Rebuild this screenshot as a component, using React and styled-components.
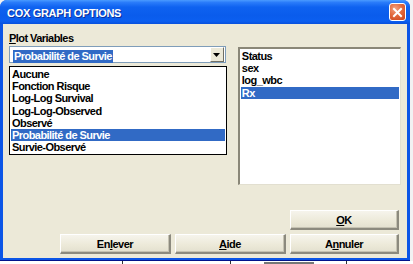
import React from "react";
import styled, { createGlobalStyle } from "styled-components";

const Global = createGlobalStyle`
  html, body { margin: 0; padding: 0; background: #f2f2f2; overflow: hidden; }
  * { box-sizing: border-box; }
`;

const font = `"Liberation Sans", Arial, sans-serif`;

const Page = styled.div`
  width: 413px;
  height: 264px;
  display: flex;
  flex-direction: column;
  background: #f2f2f2;
`;

const Window = styled.div`
  width: 410px;
  height: 261px;
  flex: none;
  display: flex;
  flex-direction: column;
  background: #0b55e6;
  border-radius: 7px 7px 0 0;
  border-bottom: 1px solid #00138c;
  overflow: hidden;
`;

const TitleBar = styled.div`
  height: 24px;
  flex: none;
  display: flex;
  align-items: center;
  justify-content: space-between;
  padding: 0 4px 0 7px;
  background: linear-gradient(
    180deg,
    #4a9bff 0%,
    #2a7cfa 10%,
    #0e62f0 30%,
    #0a5cec 65%,
    #0b5ff0 88%,
    #0850dc 100%
  );
`;

const Title = styled.span`
  font-family: ${font};
  font-weight: bold;
  font-size: 11px;
  color: #fff;
  letter-spacing: -0.3px;
  text-shadow: 1px 1px 0 #0a2e9a;
  padding-top: 1px;
`;

const CloseButton = styled.div`
  width: 17px;
  height: 18px;
  border: 1px solid #fff;
  border-radius: 3px;
  background: radial-gradient(circle at 35% 30%, #f2a282 0%, #e26a3e 45%, #c9411a 100%);
  display: flex;
  align-items: center;
  justify-content: center;
`;

const Body = styled.div`
  flex: 1;
  margin: 0 3px 2px 3px;
  background: #ece9d8;
  display: flex;
  flex-direction: column;
  padding: 8px 6px 4px 6px;
`;

const TopRow = styled.div`
  display: flex;
  align-items: flex-start;
`;

const LeftCol = styled.div`
  width: 219px;
  display: flex;
  flex-direction: column;
`;

const Label = styled.div`
  font-family: ${font};
  font-weight: bold;
  font-size: 11px;
  letter-spacing: -0.55px;
  color: #000;
  height: 14px;
  line-height: 12px;
  u { text-decoration: underline; }
`;

const Combo = styled.div`
  height: 17px;
  background: #fff;
  border: 1px solid #7f9db9;
  display: flex;
  align-items: center;
  padding: 0 1px 0 3px;
  margin-right: 1px;
`;

const ComboText = styled.span`
  flex: 1;
  span {
    background: #316ac5;
    color: #fff;
    font-family: ${font};
    font-weight: bold;
    font-size: 11px;
    letter-spacing: -0.55px;
    line-height: 13px;
    padding: 0 1px;
    display: inline-block;
  }
`;

const ArrowBtn = styled.div`
  width: 14px;
  height: 15px;
  background: #ece9d8;
  border-left: 1px solid #fff;
  border-top: 1px solid #fff;
  border-right: 1px solid #716f64;
  border-bottom: 1px solid #716f64;
  display: flex;
  align-items: center;
  justify-content: center;
`;

const DropList = styled.div`
  margin-top: 3px;
  background: #fff;
  border: 1px solid #000;
  padding: 1px 1px;
  display: flex;
  flex-direction: column;
`;

const Item = styled.div`
  height: 12.2px;
  line-height: 12px;
  padding-left: ${(p) => p.$pad}px;
  font-family: ${font};
  font-weight: bold;
  font-size: 11px;
  letter-spacing: -0.55px;
  color: ${(p) => (p.$selected ? "#fff" : "#000")};
  background: ${(p) => (p.$selected ? "#316ac5" : "transparent")};
  white-space: nowrap;
`;

const VarList = styled.div`
  margin-left: 11px;
  margin-top: 15px;
  width: 164px;
  height: 138px;
  background: #fff;
  border-top: 2px solid #8a8778;
  border-left: 2px solid #8a8778;
  border-right: 1px solid #e2dfd0;
  border-bottom: 1px solid #e2dfd0;
  padding: 1px 1px;
  display: flex;
  flex-direction: column;
`;

const Spacer = styled.div`
  flex: 1;
`;

const ButtonGrid = styled.div`
  display: grid;
  grid-template-columns: 111px 111px 109px;
  grid-template-rows: 20px 20px;
  column-gap: 4px;
  row-gap: 4px;
  justify-content: end;
  padding-right: 2px;
`;

const Button = styled.div`
  grid-column: ${(p) => p.$col};
  grid-row: ${(p) => p.$row};
  background: linear-gradient(180deg, #f6f4ec 0%, #ece9d8 60%, #e3e0cf 100%);
  border-top: 1px solid #fff;
  border-left: 1px solid #fff;
  border-right: 2px solid #8c8a7e;
  border-bottom: 2px solid #8c8a7e;
  box-shadow: inset -1px -1px 0 #c5c2b2;
  display: flex;
  align-items: center;
  justify-content: center;
  font-family: ${font};
  font-weight: bold;
  font-size: 11px;
  letter-spacing: -0.5px;
  color: #000;
  u { text-decoration: underline; }
`;

const Backdrop = styled.div`
  flex: 1;
  background: #fff;
  display: grid;
  grid-template-columns: 123px 108px 116px 1fr;
`;

const BackCell = styled.div`
  border-right: ${(p) => (p.$line ? "1px solid #333" : "none")};
  display: flex;
  justify-content: center;
`;

const BackInk = styled.div`
  width: 50px;
  height: 2px;
  margin-top: 1px;
  background: #777;
`;

const plotItems = [
  "Aucune",
  "Fonction Risque",
  "Log-Log Survival",
  "Log-Log-Observed",
  "Observé",
  "Probabilité de Survie",
  "Survie-Observé",
];

const vars = ["Status", "sex", "log_wbc", "Rx"];

export default function App() {
  return (
    <>
      <Global />
      <Page>
        <Window>
          <TitleBar>
            <Title>COX GRAPH OPTIONS</Title>
            <CloseButton>
              <svg width="11" height="11" viewBox="0 0 11 11">
                <path d="M2 2 L9 9 M9 2 L2 9" stroke="#fff" strokeWidth="2" strokeLinecap="square" />
              </svg>
            </CloseButton>
          </TitleBar>
          <Body>
            <TopRow>
              <LeftCol>
                <Label>
                  <u>P</u>lot Variables
                </Label>
                <Combo>
                  <ComboText>
                    <span>Probabilité de Survie</span>
                  </ComboText>
                  <ArrowBtn>
                    <svg width="7" height="4" viewBox="0 0 7 4">
                      <path d="M0 0 H7 L3.5 4 Z" fill="#000" />
                    </svg>
                  </ArrowBtn>
                </Combo>
                <DropList>
                  {plotItems.map((t) => (
                    <Item key={t} $pad={1} $selected={t === "Probabilité de Survie"}>
                      {t}
                    </Item>
                  ))}
                </DropList>
              </LeftCol>
              <VarList>
                {vars.map((v) => (
                  <Item key={v} $pad={1} $selected={v === "Rx"}>
                    {v}
                  </Item>
                ))}
              </VarList>
            </TopRow>
            <Spacer />
            <ButtonGrid>
              <Button $col={3} $row={1}>
                <u>O</u>K
              </Button>
              <Button $col={1} $row={2}>
                En<u>l</u>ever
              </Button>
              <Button $col={2} $row={2}>
                <u>A</u>ide
              </Button>
              <Button $col={3} $row={2}>
                A<u>n</u>nuler
              </Button>
            </ButtonGrid>
          </Body>
        </Window>
        <Backdrop>
          <BackCell $line />
          <BackCell $line />
          <BackCell $line>
            <BackInk />
          </BackCell>
          <BackCell />
        </Backdrop>
      </Page>
    </>
  );
}
